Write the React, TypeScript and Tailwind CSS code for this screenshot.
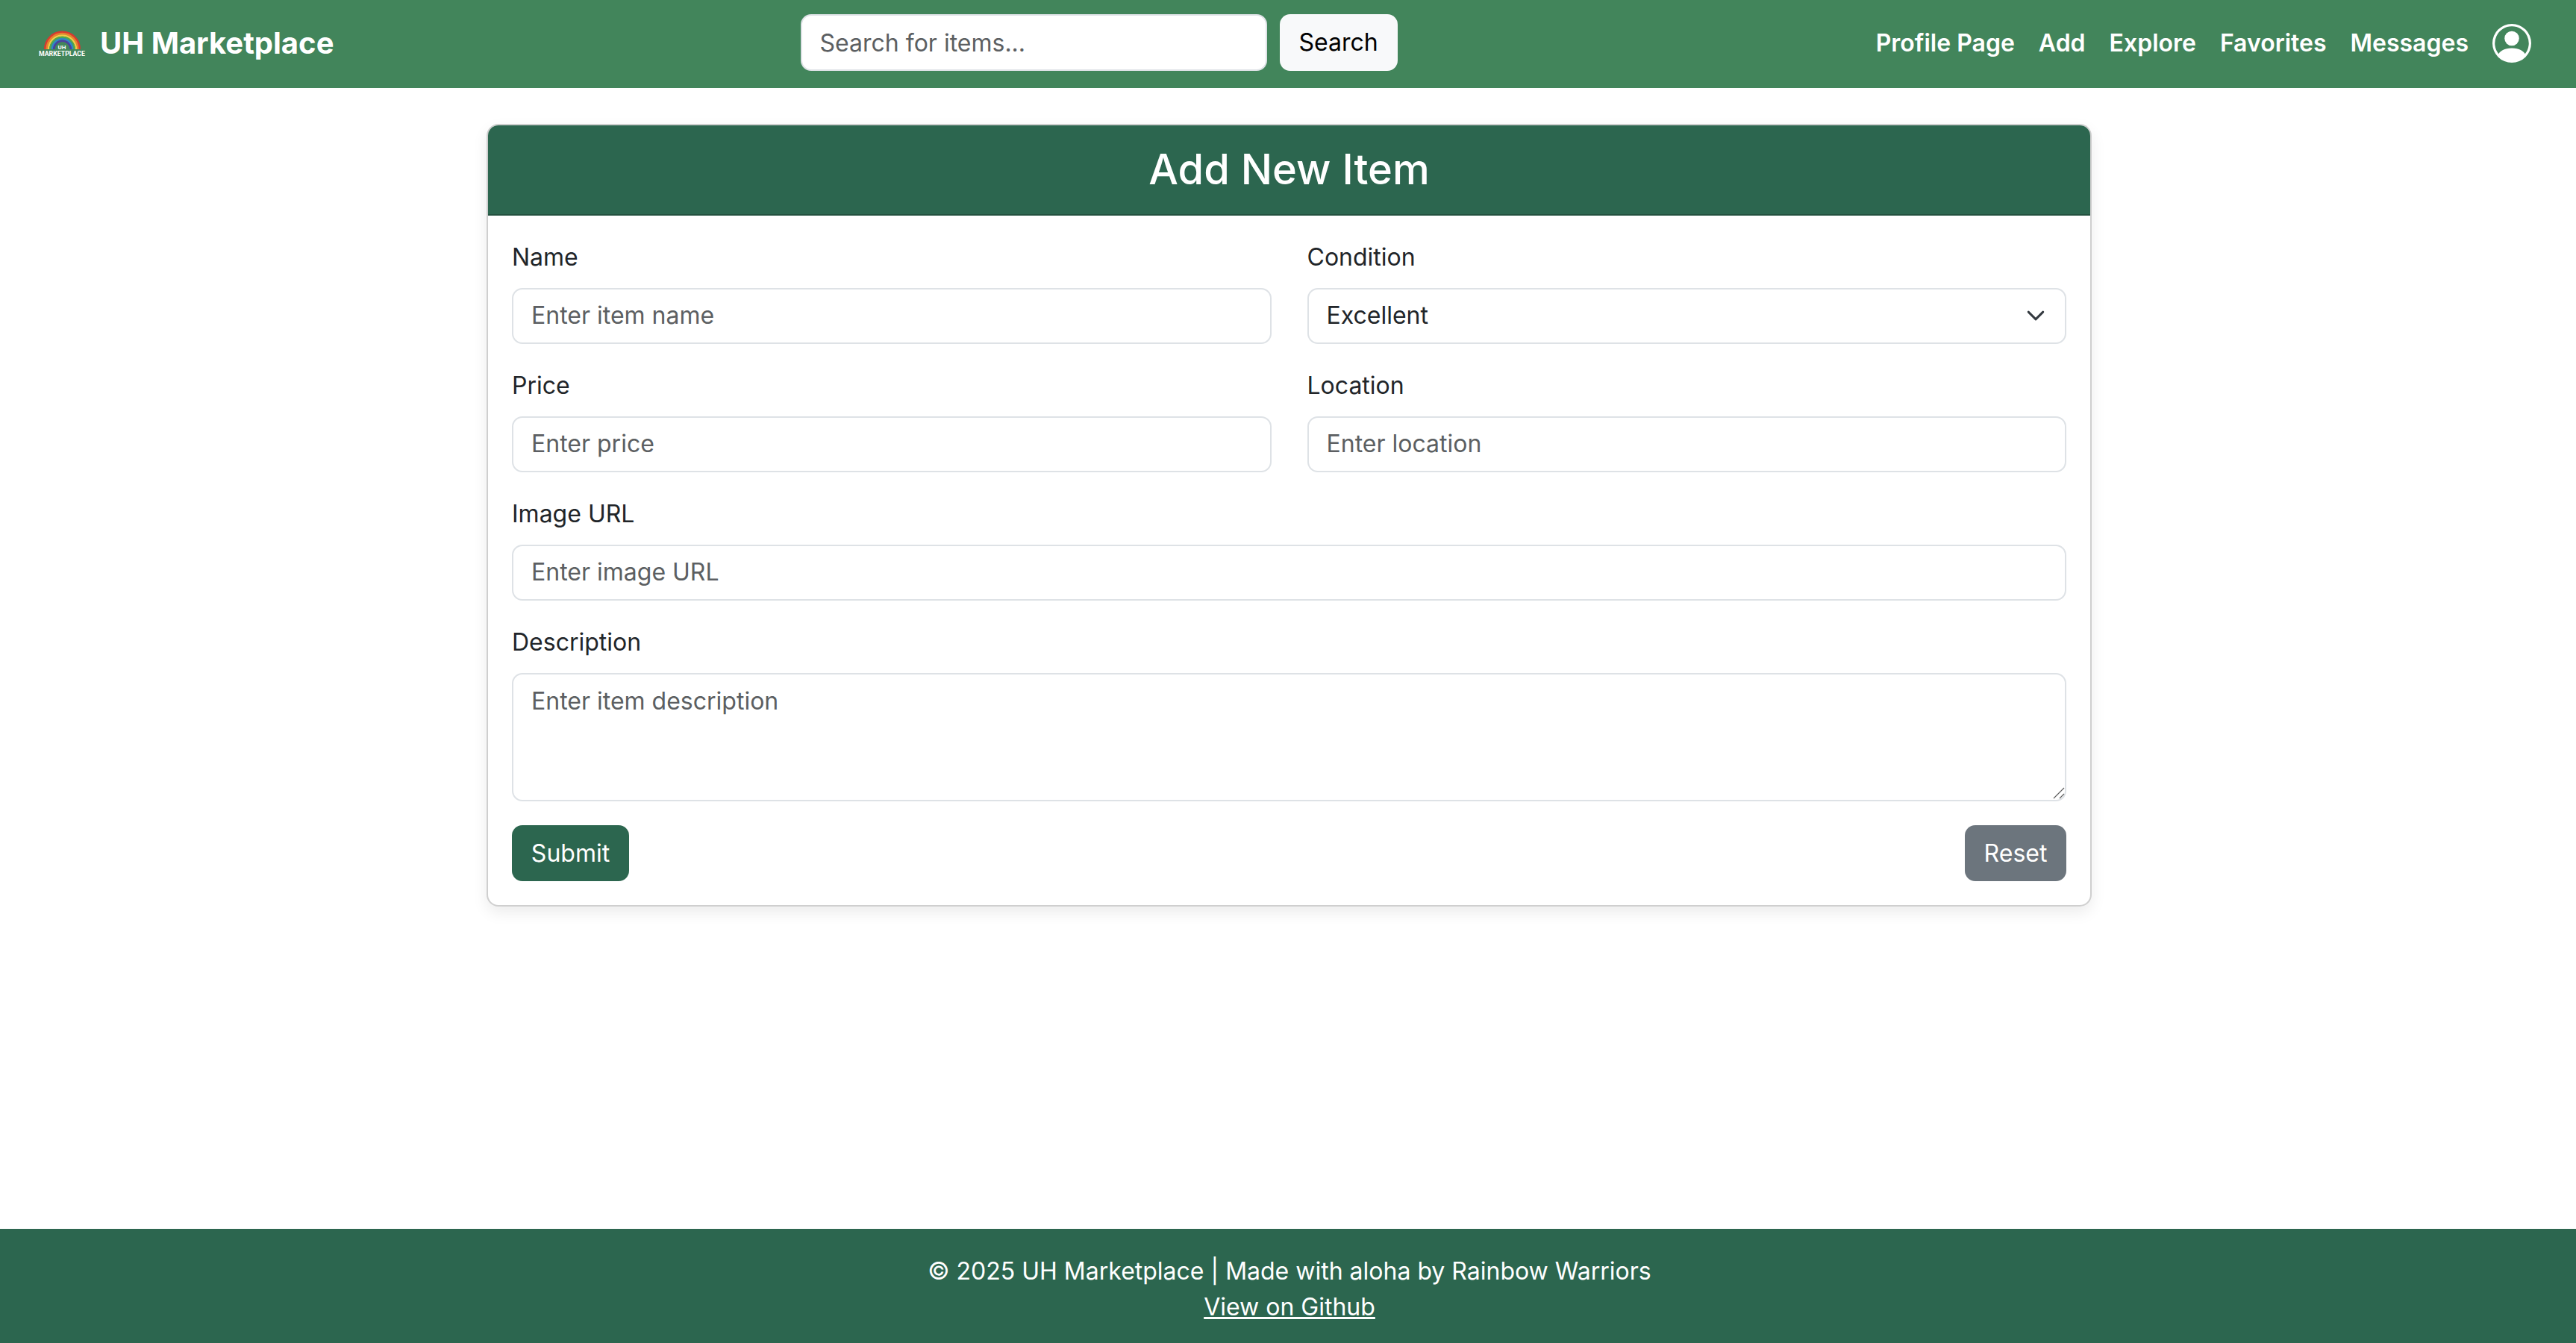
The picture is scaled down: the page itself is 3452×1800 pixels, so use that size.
import { BsPersonCircle } from 'react-icons/bs'

const NAV_LINKS = ['Profile Page', 'Add', 'Explore', 'Favorites', 'Messages']
const RAINBOW = ['#d9392f', '#ee7d2b', '#f6c945', '#4fa84e', '#2f86c9', '#4b3fa0']

const inputClass =
  'w-full h-[75px] rounded-[14px] border-2 border-[#dee2e6] bg-white px-[24px] pb-[2px] text-[32px] text-[#212529] placeholder:text-[#5c5f62] outline-none'
const labelClass = 'block h-[49px] mb-[16px] text-[32px] leading-[47px] text-[#212529]'

function Logo() {
  return (
    <svg width="64" height="36" viewBox="0 0 64 36" className="shrink-0">
      {RAINBOW.map((color, i) => {
        const r = 23.3 - i * 2.4
        return (
          <path
            key={color}
            d={`M${32.5 - r} 25 A${r} ${r} 0 0 1 ${32.5 + r} 25`}
            fill="none"
            stroke={color}
            strokeWidth="2.5"
          />
        )
      })}
      <text x="32" y="25" textAnchor="middle" fontSize="8" fontWeight="700" fill="#fff" fontFamily="Roboto, sans-serif">
        UH
      </text>
      <text x="1" y="34" textLength="62" lengthAdjust="spacingAndGlyphs" fontSize="8.5" fontWeight="700" fill="#fff" fontFamily="Roboto, sans-serif">
        MARKETPLACE
      </text>
    </svg>
  )
}

function Navbar() {
  return (
    <nav className="flex h-[118px] shrink-0 items-center justify-between bg-[#42855b] pl-[51px] pr-[60px]">
      <a className="flex items-center gap-[19px] text-[40px] font-bold leading-none text-white">
        <Logo />
        <span className="-mt-[3px]">UH Marketplace</span>
      </a>
      <form className="-mt-[4px] flex items-center gap-[17px]">
        <input
          placeholder="Search for items..."
          className="h-[76px] w-[625px] rounded-[14px] border-2 border-[#dee2e6] bg-white px-[24px] text-[32px] text-[#212529] placeholder:text-[#5c5f62] outline-none"
        />
        <button type="button" className="h-[76px] w-[158px] rounded-[14px] bg-[#f8f9fa] text-[32px] text-black">
          Search
        </button>
      </form>
      <div className="flex items-center">
        {NAV_LINKS.map((link) => (
          <a key={link} className="-mt-[3px] px-[16px] text-[32px] font-semibold text-white">
            {link}
          </a>
        ))}
        <BsPersonCircle className="-mt-[2px] ml-[16px] size-[52px] text-white" />
      </div>
    </nav>
  )
}

function AddItemForm() {
  return (
    <div className="w-[2151px] self-start overflow-hidden rounded-[16px] border-2 border-[#cfcfcf] bg-white shadow-[0_8px_20px_rgba(0,0,0,0.08)]">
      <div className="flex h-[121px] items-center justify-center border-b-2 border-[#24513f] bg-[#2c664f]">
        <h2 className="-mt-[2px] text-[56px] font-medium text-white">Add New Item</h2>
      </div>
      <form className="flex flex-col gap-[32px] p-[32px]">
        <div className="grid grid-cols-2 gap-x-[48px] gap-y-[32px]">
          <div>
            <label className={labelClass}>Name</label>
            <input placeholder="Enter item name" className={inputClass} />
          </div>
          <div>
            <label className={labelClass}>Condition</label>
            <div className="relative">
              <select className={`${inputClass} appearance-none`} defaultValue="Excellent">
                <option>Excellent</option>
                <option>Good</option>
                <option>Fair</option>
                <option>Poor</option>
              </select>
              <svg viewBox="0 0 16 16" className="pointer-events-none absolute right-[28px] top-[24px] size-[26px]" fill="none" stroke="#343a40" strokeWidth="1.8" strokeLinecap="round" strokeLinejoin="round">
                <path d="m2 5 6 6 6-6" />
              </svg>
            </div>
          </div>
          <div>
            <label className={labelClass}>Price</label>
            <input placeholder="Enter price" className={inputClass} />
          </div>
          <div>
            <label className={labelClass}>Location</label>
            <input placeholder="Enter location" className={inputClass} />
          </div>
        </div>
        <div>
          <label className={labelClass}>Image URL</label>
          <input placeholder="Enter image URL" className={inputClass} />
        </div>
        <div>
          <label className={labelClass}>Description</label>
          <div className="relative">
            <textarea
              placeholder="Enter item description"
              className="block h-[172px] w-full resize-none rounded-[14px] border-2 border-[#dee2e6] bg-white px-[24px] py-[12px] text-[32px] text-[#212529] placeholder:text-[#5c5f62] outline-none"
            />
            <svg viewBox="0 0 16 16" className="pointer-events-none absolute right-[2px] bottom-[3px] size-[16px]" stroke="#5f5f5f" strokeWidth="1.2">
              <path d="M1 15 15 1M9 15l6-6" />
            </svg>
          </div>
        </div>
        <div className="flex justify-between">
          <button type="button" className="h-[75px] w-[157px] rounded-[14px] bg-[#2c664f] text-[32px] text-white">
            Submit
          </button>
          <button type="button" className="h-[75px] w-[136px] rounded-[14px] bg-[#6c757d] text-[32px] text-white">
            Reset
          </button>
        </div>
      </form>
    </div>
  )
}

function Footer() {
  return (
    <footer className="h-[153px] shrink-0 bg-[#2c664f] pl-[4px] pt-[33px] text-center text-[32px] leading-[48px] text-white">
      <div>© 2025 UH Marketplace | Made with aloha by Rainbow Warriors</div>
      <a className="underline">View on Github</a>
    </footer>
  )
}

export default function App() {
  return (
    <div className="flex h-[1800px] flex-col overflow-hidden bg-white font-['Inter',sans-serif]">
      <Navbar />
      <main className="flex flex-1 justify-center pl-[3px] pt-[48px]">
        <AddItemForm />
      </main>
      <Footer />
    </div>
  )
}
